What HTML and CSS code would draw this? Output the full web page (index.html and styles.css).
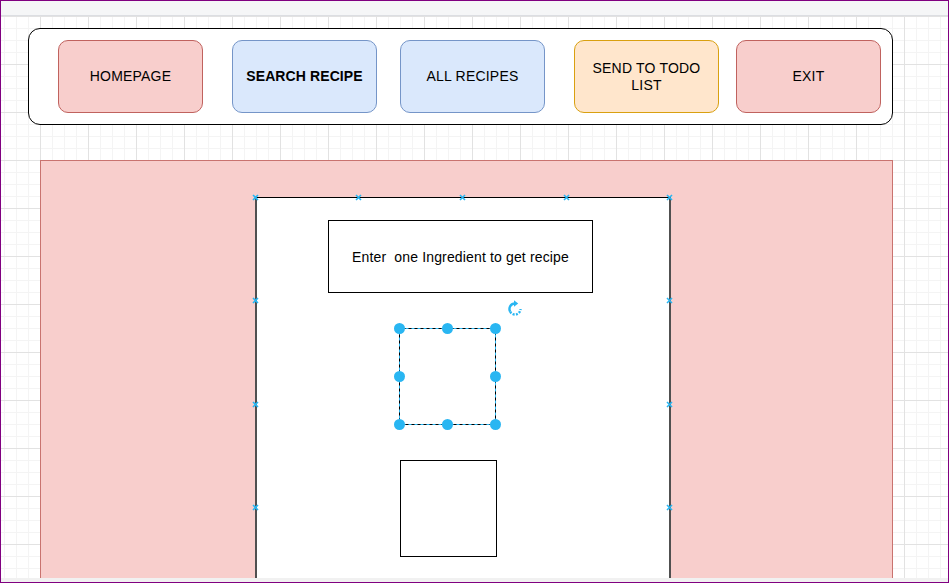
FILE: index.html
```html
<!DOCTYPE html>
<html>
<head>
<meta charset="utf-8">
<link rel="stylesheet" href="styles.css">
</head>
<body>
<div class="frame">
  <div class="topbar"></div>
  <div class="canvas">
    <div class="toolbar">
      <div class="btn red">HOMEPAGE</div>
      <div class="btn blue bold gap29">SEARCH RECIPE</div>
      <div class="btn blue gap23">ALL RECIPES</div>
      <div class="btn orange gap29">SEND TO TODO LIST</div>
      <div class="btn red gap17">EXIT</div>
    </div>
    <div class="stage">
      <div class="panel">
        <svg class="mk mk-t1" viewBox="0 0 7 7"><path d="M1 1L6 6M6 1L1 6"/></svg>
        <svg class="mk mk-t2" viewBox="0 0 7 7"><path d="M1 1L6 6M6 1L1 6"/></svg>
        <svg class="mk mk-t3" viewBox="0 0 7 7"><path d="M1 1L6 6M6 1L1 6"/></svg>
        <svg class="mk mk-t4" viewBox="0 0 7 7"><path d="M1 1L6 6M6 1L1 6"/></svg>
        <svg class="mk mk-t5" viewBox="0 0 7 7"><path d="M1 1L6 6M6 1L1 6"/></svg>
        <svg class="mk mk-l1" viewBox="0 0 7 7"><path d="M1 1L6 6M6 1L1 6"/></svg>
        <svg class="mk mk-l2" viewBox="0 0 7 7"><path d="M1 1L6 6M6 1L1 6"/></svg>
        <svg class="mk mk-l3" viewBox="0 0 7 7"><path d="M1 1L6 6M6 1L1 6"/></svg>
        <svg class="mk mk-r1" viewBox="0 0 7 7"><path d="M1 1L6 6M6 1L1 6"/></svg>
        <svg class="mk mk-r2" viewBox="0 0 7 7"><path d="M1 1L6 6M6 1L1 6"/></svg>
        <svg class="mk mk-r3" viewBox="0 0 7 7"><path d="M1 1L6 6M6 1L1 6"/></svg>

        <div class="prompt">Enter  one Ingredient to get recipe</div>

        <div class="selected">
          <svg class="dash" viewBox="0 0 97 97"><rect x="0.5" y="0.5" width="96" height="96"/></svg>
          <span class="h h-tl"></span><span class="h h-tm"></span><span class="h h-tr"></span>
          <span class="h h-ml"></span><span class="h h-mr"></span>
          <span class="h h-bl"></span><span class="h h-bm"></span><span class="h h-br"></span>
          <svg class="rotate" viewBox="0 0 16 18">
            <path class="arc-solid" d="M8 4.5A5.5 5.5 0 0 0 3.2 12.7"/>
            <path class="arc-dots" d="M3.2 12.7A5.5 5.5 0 0 0 13.5 10"/>
            <polygon points="7,1.2 11.2,4.5 7,7.8"/>
          </svg>
        </div>

        <div class="box"></div>
      </div>
    </div>
  </div>
  <div class="hscroll"></div>
</div>
</body>
</html>
```
FILE: styles.css
```css
html, body {
  margin: 0;
  padding: 0;
  background: #fff;
}

.frame {
  width: 949px;
  height: 583px;
  box-sizing: border-box;
  border: 1px solid #800080;
  display: flex;
  flex-direction: column;
  overflow: hidden;
  font-family: "Liberation Sans", Arial, sans-serif;
}

.topbar {
  height: 14px;
  flex: none;
  background: #f5f6f7;
  border-bottom: 1px solid #dcdee2;
}

.canvas {
  flex: 1;
  overflow: hidden;
  background-color: #fff;
  background-image:
    linear-gradient(to right, #e2e2e2 1px, transparent 1px),
    linear-gradient(to bottom, #e2e2e2 1px, transparent 1px),
    linear-gradient(to right, #f4f4f4 1px, transparent 1px),
    linear-gradient(to bottom, #f4f4f4 1px, transparent 1px);
  background-size: 48px 48px, 48px 48px, 12px 12px, 12px 12px;
  background-position: 39px 0, 39px 0, 3px 0, 3px 0;
}

.hscroll {
  height: 4px;
  flex: none;
  background: #f1f1f1;
}

/* toolbar */
.toolbar {
  margin: 12px 0 0 27px;
  width: 865px;
  height: 97px;
  box-sizing: border-box;
  border: 1px solid #000;
  border-radius: 12px;
  background: #fff;
  display: flex;
  align-items: center;
  padding-left: 29px;
}

.btn {
  width: 145px;
  height: 73px;
  box-sizing: border-box;
  border-radius: 10px;
  border: 1px solid;
  display: flex;
  align-items: center;
  justify-content: center;
  text-align: center;
  padding: 0 8px;
  font-size: 14px;
  line-height: 17px;
  letter-spacing: 0.2px;
  color: #000;
  flex: none;
}

.gap29 { margin-left: 29px; }
.gap23 { margin-left: 23px; }
.gap17 { margin-left: 17px; }

.red { background: #f8cecc; border-color: #c0625e; }
.blue { background: #dae8fc; border-color: #7595c8; }
.orange { background: #ffe6cc; border-color: #d9a010; }
.bold { font-weight: bold; letter-spacing: 0.1px; }

/* stage */
.stage {
  margin: 35px 0 0 39px;
  width: 853px;
  height: 470px;
  box-sizing: border-box;
  background: #f8cecc;
  border: 1px solid #c9736f;
}

.panel {
  position: relative;
  margin: 36px 0 0 214px;
  width: 416px;
  height: 440px;
  box-sizing: border-box;
  background: #fff;
  border-top: 1px solid #000;
  border-left: 2px solid #505050;
  border-right: 2px solid #505050;
  display: flex;
  flex-direction: column;
  align-items: flex-start;
}

.mk {
  position: absolute;
  width: 7px;
  height: 7px;
  fill: none;
  stroke: #29b6f2;
  stroke-width: 1.6;
}
.mk-t1 { left: -5px; top: -4px; }
.mk-t2 { left: 98px; top: -4px; }
.mk-t3 { left: 202px; top: -4px; }
.mk-t4 { left: 306px; top: -4px; }
.mk-t5 { left: 409px; top: -4px; }
.mk-l1 { left: -5px; top: 99px; }
.mk-l2 { left: -5px; top: 203px; }
.mk-l3 { left: -5px; top: 306px; }
.mk-r1 { left: 409px; top: 99px; }
.mk-r2 { left: 409px; top: 203px; }
.mk-r3 { left: 409px; top: 306px; }

.prompt {
  margin: 22px 0 0 71px;
  width: 265px;
  height: 73px;
  box-sizing: border-box;
  border: 1px solid #000;
  display: flex;
  align-items: center;
  justify-content: center;
  font-size: 14px;
  letter-spacing: 0.15px;
  color: #000;
  white-space: pre;
}

.selected {
  position: relative;
  margin: 35px 0 0 142px;
  width: 97px;
  height: 97px;
  box-sizing: border-box;
  border: 1px solid #000;
}

.dash {
  position: absolute;
  left: -1px;
  top: -1px;
  width: 97px;
  height: 97px;
  fill: none;
  stroke: #29b6f2;
  stroke-width: 1;
  stroke-dasharray: 3 3;
}

.h {
  position: absolute;
  width: 11px;
  height: 11px;
  border-radius: 50%;
  background: #29b6f2;
}
.h-tl { left: -6px; top: -6px; }
.h-tm { left: 42px; top: -6px; }
.h-tr { left: 90px; top: -6px; }
.h-ml { left: -6px; top: 42px; }
.h-mr { left: 90px; top: 42px; }
.h-bl { left: -6px; top: 90px; }
.h-bm { left: 42px; top: 90px; }
.h-br { left: 90px; top: 90px; }

.rotate {
  position: absolute;
  left: 107px;
  top: -30px;
  width: 16px;
  height: 18px;
}
.rotate path {
  fill: none;
  stroke: #29b6f2;
  stroke-width: 2.4;
}
.rotate .arc-dots {
  stroke-dasharray: 2 1.3;
}
.rotate polygon {
  fill: #29b6f2;
}

.box {
  margin: 35px 0 0 143px;
  width: 97px;
  height: 97px;
  box-sizing: border-box;
  border: 1px solid #000;
  flex: none;
}
```
